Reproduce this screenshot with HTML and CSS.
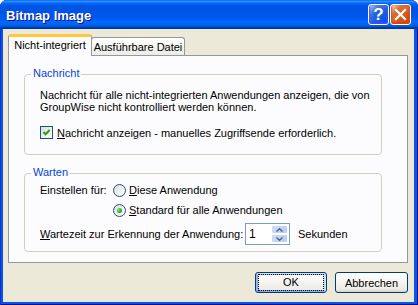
FILE: index.html
```html
<!DOCTYPE html>
<html lang="de">
<head>
    <meta charset="UTF-8">
    <title>Bitmap Image</title>
    <link rel="stylesheet" href="styles.css">
</head>
<body>
    <div class="window">
        <div class="titlebar">
            <span class="title">Bitmap Image</span>
            <div class="caption">
                <span class="cap-btn help">?</span>
                <span class="cap-btn close">
                    <svg width="19" height="19" viewBox="0 0 19 19"><path d="M5 5 L14 14 M14 5 L5 14" stroke="#fff" stroke-width="2.2" stroke-linecap="square"/></svg>
                </span>
            </div>
        </div>

        <div class="client">
            <div class="tabs">
                <div class="tab active">Nicht-integriert</div>
                <div class="tab">Ausführbare Datei</div>
            </div>

            <div class="panel">
                <!-- Nachricht -->
                <div class="group group-msg">
                    <span class="legend">Nachricht</span>
                    <p class="desc">Nachricht für alle nicht-integrierten Anwendungen anzeigen, die von<br>GroupWise nicht kontrolliert werden können.</p>
                    <label class="check">
                        <span class="box">
                            <svg width="11" height="11" viewBox="0 0 11 11"><path d="M2.5 5 L4.5 7.2 L8.7 3" fill="none" stroke="#21a121" stroke-width="2"/></svg>
                        </span>
                        <span><u>N</u>achricht anzeigen - manuelles Zugriffsende erforderlich.</span>
                    </label>
                </div>

                <!-- Warten -->
                <div class="group group-wait">
                    <span class="legend">Warten</span>
                    <div class="row-set">
                        <span class="set-label">Einstellen für:</span>
                        <div class="radio-list">
                            <label class="radio"><span class="dot"></span><span><u>D</u>iese Anwendung</span></label>
                            <label class="radio"><span class="dot on"></span><span><u>S</u>tandard für alle Anwendungen</span></label>
                        </div>
                    </div>
                    <div class="row-timeout">
                        <span class="timeout-label"><u>W</u>artezeit zur Erkennung der Anwendung:</span>
                        <span class="spin">
                            <span class="spin-val">1</span>
                            <span class="spin-btns">
                                <span class="spin-btn"><svg width="7" height="4" viewBox="0 0 7 4"><path d="M0.5 3.5 L3.5 0.8 L6.5 3.5" fill="none" stroke="#4d6185" stroke-width="1.4"/></svg></span>
                                <span class="spin-btn"><svg width="7" height="4" viewBox="0 0 7 4"><path d="M0.5 0.5 L3.5 3.2 L6.5 0.5" fill="none" stroke="#4d6185" stroke-width="1.4"/></svg></span>
                            </span>
                        </span>
                        <span class="unit">Sekunden</span>
                    </div>
                </div>
            </div>

            <div class="actions">
                <button class="btn default"><span class="focus">OK</span></button>
                <button class="btn">Abbrechen</button>
            </div>
        </div>
    </div>
</body>
</html>
```

FILE: styles.css
```css
html, body {
    margin: 0;
    padding: 0;
}
body {
    width: 418px;
    height: 305px;
    overflow: hidden;
    font-family: "Liberation Sans", Arial, sans-serif;
    font-size: 11px;
    color: #000;
}
.window {
    width: 418px;
    height: 305px;
    display: flex;
    flex-direction: column;
    background: #0b53e4;
    border-radius: 7px 7px 0 0;
    box-shadow: inset 1px 0 #0831d9, inset -1px 0 #00138c, inset 0 -1px #00138c;
}
.titlebar {
    height: 29px;
    flex: none;
    display: flex;
    justify-content: space-between;
    align-items: flex-start;
    padding: 0 7px 0 6px;
    border-radius: 7px 7px 0 0;
    background: linear-gradient(to bottom, #0058ee 0%, #3593ff 4%, #288eff 6%, #127dff 8%, #036ffc 10%, #0262ee 14%, #0057e5 20%, #0054e3 24%, #0055eb 56%, #005bf5 66%, #026afe 76%, #0062ef 86%, #0052d6 92%, #0040ab 94%, #003092 100%);
}
.title {
    margin-top: 8px;
    font-size: 13px;
    line-height: 15px;
    font-weight: bold;
    color: #fff;
    text-shadow: 1px 1px #0f1089;
}
.caption {
    display: flex;
    gap: 1px;
    margin-top: 4px;
}
.cap-btn {
    width: 19px;
    height: 19px;
    border: 1px solid #fff;
    border-radius: 3px;
    display: flex;
    align-items: center;
    justify-content: center;
    color: #fff;
}
.help {
    background: radial-gradient(circle at 90% 90%, #0054e9 0%, #2263d5 55%, #4479e4 70%, #a3bbec 90%, #fff 100%);
    box-shadow: inset 0 -1px 2px 1px #4646ff;
    font-size: 17px;
    font-weight: bold;
    line-height: 19px;
}
.close {
    background: radial-gradient(circle at 90% 90%, #cc4600 0%, #dc6527 55%, #cd7546 70%, #ffccb2 90%, #fff 100%);
    box-shadow: inset 0 -1px 2px 1px #da4600;
}
.client {
    flex: 1;
    margin: 0 4px 3px 3px;
    padding: 5px 6px 0 5px;
    background: #ece9d8;
}
.tabs {
    display: flex;
    align-items: flex-end;
    height: 21px;
}
.tab {
    height: 18px;
    padding: 0;
    box-sizing: border-box;
    width: 94px;
    margin-left: -1px;
    border: 1px solid #919b9c;
    border-bottom: none;
    border-radius: 3px 3px 0 0;
    background: linear-gradient(to bottom, #fff, #f3f3ef 60%, #ecebe5);
    line-height: 18px;
    text-align: center;
    white-space: nowrap;
}
.tab.active {
    position: relative;
    z-index: 1;
    width: 84px;
    height: 22px;
    margin-left: 0;
    margin-bottom: -1px;
    border-top: 3px solid #ffc83c;
    background: #fcfcfe;
    line-height: 16px;
}
.panel {
    height: 208px;
    box-sizing: border-box;
    border: 1px solid #919b9c;
    background: #fcfcfe;
    padding: 18px 0 0 15px;
}
.group {
    width: 358px;
    box-sizing: border-box;
    border: 1px solid #d0d0bf;
    border-radius: 4px;
    padding: 0 0 0 15px;
}
.legend {
    display: table;
    margin: -8px 0 0 -9px;
    padding: 0 2px;
    line-height: 13px;
    color: #0046d5;
    background: #fcfcfe;
}
.group-msg {
    height: 81px;
}
.desc {
    margin: 9px 0 0;
    line-height: 12px;
}
.check, .radio {
    display: flex;
    align-items: center;
    line-height: 12px;
}
.check {
    margin-top: 13px;
    gap: 4px;
}
.box {
    width: 13px;
    height: 13px;
    box-sizing: border-box;
    border: 1px solid #1c5180;
    background: linear-gradient(135deg, #dcdcd7, #fff);
    display: flex;
    align-items: center;
    justify-content: center;
}
.group-wait {
    margin-top: 18px;
    height: 79px;
}
.row-set {
    display: flex;
    margin-top: 5px;
}
.set-label {
    width: 73px;
    line-height: 13px;
}
.radio-list {
    display: flex;
    flex-direction: column;
    gap: 7px;
}
.radio {
    gap: 3px;
    line-height: 13px;
}
.dot {
    width: 13px;
    height: 13px;
    box-sizing: border-box;
    border: 1px solid #1c5180;
    border-radius: 50%;
    background: linear-gradient(135deg, #dcdcd7, #fff);
    display: flex;
    align-items: center;
    justify-content: center;
}
.dot.on::after {
    content: "";
    width: 5px;
    height: 5px;
    border-radius: 50%;
    background: radial-gradient(circle at 35% 35%, #6ee86e, #21a121 70%);
}
.row-timeout {
    display: flex;
    align-items: center;
    margin-top: 6px;
}
.timeout-label {
    width: 205px;
}
.spin {
    width: 45px;
    height: 22px;
    box-sizing: border-box;
    border: 1px solid #7f9db9;
    background: #fff;
    display: flex;
    justify-content: space-between;
}
.spin-val {
    padding: 3px 0 0 3px;
    font-size: 12px;
}
.spin-btns {
    width: 17px;
    display: flex;
    flex-direction: column;
    padding: 1px 1px 1px 0;
}
.spin-btn {
    flex: 1;
    border: 1px solid #fff;
    border-radius: 2px;
    background: linear-gradient(135deg, #d0dcfb, #b6caf5);
    display: flex;
    align-items: center;
    justify-content: center;
}
.unit {
    margin-left: 8px;
}
.actions {
    display: flex;
    justify-content: flex-end;
    gap: 8px;
    margin-top: 9px;
}
.btn {
    width: 72px;
    height: 21px;
    padding: 0;
    border: 1px solid #003c74;
    border-radius: 3px;
    background: linear-gradient(to bottom, #fff, #ecebe6 86%, #d6d0c5);
    font-family: "Liberation Sans", Arial, sans-serif;
    font-size: 11px;
    color: #000;
}
.btn + .btn {
    width: 73px;
}
.btn.default {
    box-shadow: inset -1px 1px #cee7ff, inset 1px 2px #98b8ea, inset -2px 2px #bcd4f6, inset 1px -1px #89ade4, inset 2px -2px #89ade4;
}
.focus {
    display: block;
    margin: 0 3px;
    line-height: 13px;
    outline: 1px dotted #000;
    padding: 1px 0;
}
```
